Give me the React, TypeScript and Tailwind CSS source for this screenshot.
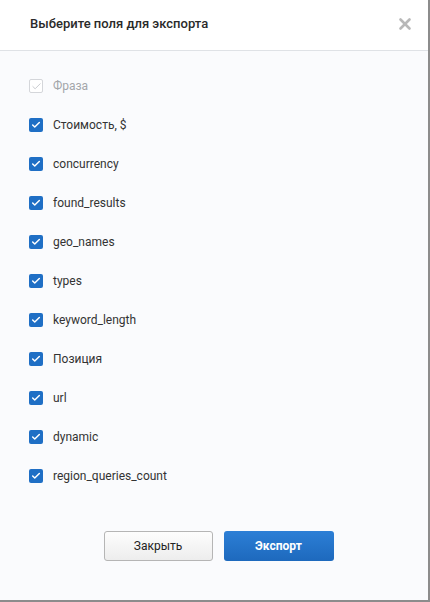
import { Check, X } from "lucide-react";

const fields = [
  "Стоимость, $",
  "concurrency",
  "found_results",
  "geo_names",
  "types",
  "keyword_length",
  "Позиция",
  "url",
  "dynamic",
  "region_queries_count",
];

function Box({ disabled }: { disabled?: boolean }) {
  if (disabled) {
    return (
      <span className="w-[14px] h-[14px] rounded-[2px] border border-[#d4d6da] bg-white flex items-center justify-center">
        <Check size={11} strokeWidth={2} className="text-[#c4c6ca]" />
      </span>
    );
  }
  return (
    <span className="w-[14px] h-[14px] rounded-[2px] bg-[#1f6fc5] flex items-center justify-center">
      <Check size={10} strokeWidth={3.5} className="text-white" />
    </span>
  );
}

export default function App() {
  return (
    <div
      className="w-[430px] h-[602px] bg-[#fafbfd] border-r-2 border-b-2 border-[#8c8c8c] flex flex-col"
      style={{ fontFamily: "Roboto, 'Noto Sans', sans-serif" }}
    >
      <div className="h-[51px] shrink-0 bg-white border-b border-[#dfe2e6] flex items-center justify-between pl-[30px] pr-[14px]">
        <h2 className="text-[13px] font-medium text-[#2a2a2a] pb-[2px]">Выберите поля для экспорта</h2>
        <X size={18} strokeWidth={3.5} className="text-[#b8b8b8] mb-[2px]" />
      </div>

      <div className="flex flex-col pl-[29px] pt-[28px] gap-[25px]">
        <label className="flex items-center gap-[10px] h-[14px]">
          <Box disabled />
          <span className="text-[12px] text-[#a3a6aa]">Фраза</span>
        </label>
        {fields.map((f) => (
          <label key={f} className="flex items-center gap-[10px] h-[14px]">
            <Box />
            <span className="text-[12px] text-[#333]">{f}</span>
          </label>
        ))}
      </div>

      <div className="flex justify-center gap-[11px] mt-[48px] pl-[9px]">
        <button className="w-[109px] h-[30px] rounded-[3px] border border-[#b5b5b5] bg-gradient-to-b from-[#fdfdfd] to-[#ededed] text-[12px] text-[#222]">
          Закрыть
        </button>
        <button className="w-[110px] h-[30px] rounded-[3px] bg-gradient-to-b from-[#2c7fd6] to-[#1d69bd] text-[12px] font-bold text-white">
          Экспорт
        </button>
      </div>
    </div>
  );
}
